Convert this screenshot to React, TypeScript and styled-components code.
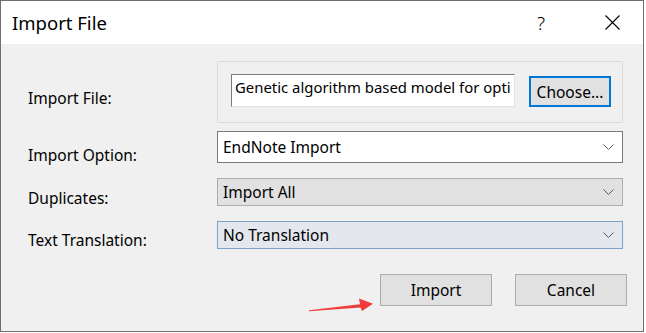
import React from "react";
import styled, { createGlobalStyle } from "styled-components";

const GlobalStyle = createGlobalStyle`
  body {
    margin: 0;
    background: #ffffff;
  }
`;

const Window = styled.div`
  position: relative;
  width: 644px;
  height: 332px;
  box-sizing: border-box;
  border: 1px solid #6e6e6e;
  display: flex;
  flex-direction: column;
  font-family: "Noto Sans", "Open Sans", sans-serif;
  color: #000;
`;

const TitleBar = styled.div`
  height: 43px;
  display: flex;
  align-items: center;
  padding-left: 11px;
  background: #ffffff;
`;

const Title = styled.div`
  flex: 1;
  font-size: 18.5px;
`;

const CaptionButton = styled.div<{ $width: number }>`
  width: ${(p) => p.$width}px;
  height: 43px;
  display: flex;
  align-items: center;
  justify-content: center;
  font-size: 19px;
  font-weight: 300;
`;

const Body = styled.div`
  flex: 1;
  background: #f0f0f0;
  padding: 17px 16px 0 27px;
`;

const Row = styled.div<{ $gap: number }>`
  display: grid;
  grid-template-columns: 189px 406px;
  align-items: center;
  margin-top: ${(p) => p.$gap}px;
`;

/* the labels sit a few pixels below the middle of their control */
const Label = styled.div<{ $drop: number }>`
  font-size: 15.5px;
  line-height: 20px;
  white-space: nowrap;
  padding-top: ${(p) => p.$drop}px;
  margin-bottom: -${(p) => p.$drop}px;
`;

const GroupBox = styled.div`
  box-sizing: border-box;
  height: 62px;
  border: 1px solid #dcdcdc;
  padding: 12px 11px 15px 13px;
  display: flex;
  align-items: flex-end;
  gap: 14px;
`;

const PathField = styled.div`
  box-sizing: border-box;
  width: 284px;
  height: 33px;
  padding: 2px 0 0 3px;
  background: #ffffff;
  border-top: 1px solid #7a7a7a;
  border-left: 1px solid #7a7a7a;
  border-right: 1px solid #e3e3e3;
  border-bottom: 1px solid #e3e3e3;
  font-size: 14.9px;
  line-height: 20px;
  white-space: nowrap;
  overflow: hidden;
`;

const DialogButton = styled.button<{ $focused?: boolean }>`
  box-sizing: border-box;
  width: ${(p) => (p.$focused ? 82 : 112)}px;
  height: ${(p) => (p.$focused ? 31 : 32)}px;
  padding: 0;
  background: #e1e1e1;
  border: ${(p) => (p.$focused ? "2px solid #0078d7" : "1px solid #adadad")};
  font-family: "Noto Sans", "Open Sans", sans-serif;
  font-size: 15.5px;
  white-space: nowrap;
  color: #000;
`;

const Combo = styled.div<{ $tone: "white" | "gray" | "blue" }>`
  box-sizing: border-box;
  height: ${(p) => (p.$tone === "white" ? 32 : 28)}px;
  display: flex;
  align-items: center;
  justify-content: space-between;
  padding: 0 8px 0 5px;
  font-size: 15.5px;
  background: ${(p) =>
    p.$tone === "white" ? "#ffffff" : p.$tone === "gray" ? "#e1e1e1" : "#e4e8ee"};
  border: 1px solid
    ${(p) =>
      p.$tone === "white" ? "#7a7a7a" : p.$tone === "gray" ? "#adadad" : "#7ea0c6"};
`;

const ButtonRow = styled.div`
  display: flex;
  justify-content: flex-end;
  gap: 23px;
  margin-top: 25px;
`;

const Arrow = styled.svg`
  position: absolute;
  left: 307px;
  top: 296px;
  pointer-events: none;
`;

const Chevron = () => (
  <svg width="11" height="6" viewBox="0 0 11 6">
    <polyline points="0.5,0.5 5.5,5.5 10.5,0.5" fill="none" stroke="#5a5a5a" strokeWidth="1" />
  </svg>
);

const CloseIcon = () => (
  <svg width="15" height="15" viewBox="0 0 15 15">
    <path d="M0.5 0.5 L14.5 14.5 M14.5 0.5 L0.5 14.5" stroke="#000" strokeWidth="1.1" />
  </svg>
);

const fields = [
  { label: "Duplicates:", value: "Import All", tone: "gray" as const, gap: 15, drop: 6 },
  { label: "Text Translation:", value: "No Translation", tone: "blue" as const, gap: 15, drop: 5 },
];

export default function App() {
  return (
    <>
      <GlobalStyle />
      <Window>
        <TitleBar>
          <Title>Import File</Title>
          <CaptionButton $width={80}>?</CaptionButton>
          <CaptionButton $width={62}>
            <CloseIcon />
          </CaptionButton>
        </TitleBar>
        <Body>
          <Row $gap={0}>
            <Label $drop={6}>Import File:</Label>
            <GroupBox>
              <PathField>Genetic algorithm based model for opti</PathField>
              <DialogButton $focused>Choose...</DialogButton>
            </GroupBox>
          </Row>
          <Row $gap={8}>
            <Label $drop={8}>Import Option:</Label>
            <Combo $tone="white">
              EndNote Import
              <Chevron />
            </Combo>
          </Row>
          {fields.map((f) => (
            <Row $gap={f.gap} key={f.label}>
              <Label $drop={f.drop}>{f.label}</Label>
              <Combo $tone={f.tone}>
                {f.value}
                <Chevron />
              </Combo>
            </Row>
          ))}
          <ButtonRow>
            <DialogButton>Import</DialogButton>
            <DialogButton>Cancel</DialogButton>
          </ButtonRow>
        </Body>
        <Arrow width="66" height="16" viewBox="308 297 66 16">
          <polygon
            points="309,310.3 360,304.3 359,298.5 373,303.8 362,311 360.5,307.6 309,311.3"
            fill="#ef3b3b"
          />
        </Arrow>
      </Window>
    </>
  );
}
